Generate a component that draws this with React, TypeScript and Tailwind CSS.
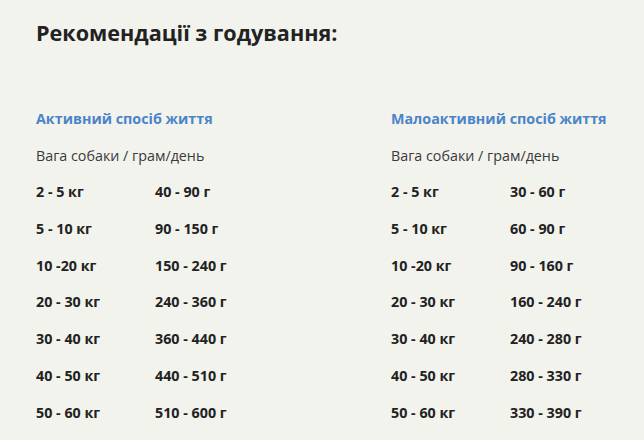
const active: [string, string][] = [
  ["2 - 5 кг", "40 - 90 г"],
  ["5 - 10 кг", "90 - 150 г"],
  ["10 -20 кг", "150 - 240 г"],
  ["20 - 30 кг", "240 - 360 г"],
  ["30 - 40 кг", "360 - 440 г"],
  ["40 - 50 кг", "440 - 510 г"],
  ["50 - 60 кг", "510 - 600 г"],
];

const lazy: [string, string][] = [
  ["2 - 5 кг", "30 - 60 г"],
  ["5 - 10 кг", "60 - 90 г"],
  ["10 -20 кг", "90 - 160 г"],
  ["20 - 30 кг", "160 - 240 г"],
  ["30 - 40 кг", "240 - 280 г"],
  ["40 - 50 кг", "280 - 330 г"],
  ["50 - 60 кг", "330 - 390 г"],
];

function Column({ title, rows }: { title: string; rows: [string, string][] }) {
  return (
    <div className="w-[355px] shrink-0">
      <h3 className="text-[14.3px] font-bold leading-[20px] text-[#4a84c9]">{title}</h3>
      <p className="mt-[17px] text-[14.3px] leading-[20px] text-[#3a3a3a]">Вага собаки / грам/день</p>
      <div className="mt-[16px] flex flex-col gap-[16.8px]">
        {rows.map(([w, g]) => (
          <div key={w} className="flex text-[14.3px] font-bold leading-[20px] text-[#222]">
            <span className="w-[119px]">{w}</span>
            <span>{g}</span>
          </div>
        ))}
      </div>
    </div>
  );
}

export default function App() {
  return (
    <div
      className="h-[440px] w-[644px] overflow-hidden bg-[#f3f3ee] pl-[36px] pt-[17px]"
      style={{ fontFamily: '"Open Sans", sans-serif' }}
    >
      <h2 className="text-[21.6px] font-bold leading-[32px] text-[#222]">Рекомендації з годування:</h2>
      <div className="mt-[60px] flex">
        <Column title="Активний спосіб життя" rows={active} />
        <Column title="Малоактивний спосіб життя" rows={lazy} />
      </div>
    </div>
  );
}
